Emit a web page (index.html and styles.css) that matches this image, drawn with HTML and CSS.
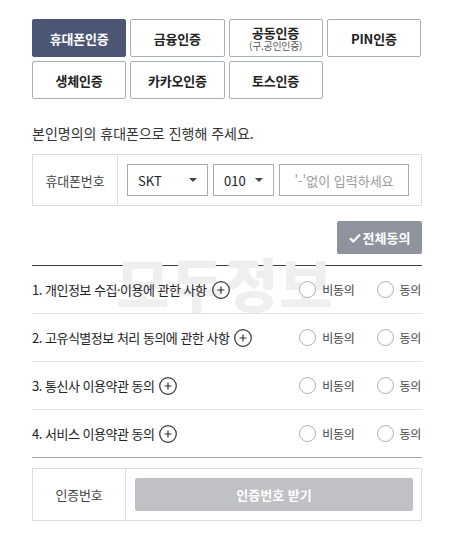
FILE: index.html
```html
<!DOCTYPE html>
<html lang="ko">
<head>
<meta charset="utf-8">
<link rel="stylesheet" href="styles.css">
</head>
<body>
<div class="page">
  <div class="tabs">
    <div class="tab active">휴대폰인증</div>
    <div class="tab">금융인증</div>
    <div class="tab two"><span>공동인증</span><small>(구.공인인증)</small></div>
    <div class="tab">PIN인증</div>
    <div class="tab">생체인증</div>
    <div class="tab">카카오인증</div>
    <div class="tab">토스인증</div>
  </div>

  <p class="heading">본인명의의 휴대폰으로 진행해 주세요.</p>

  <div class="phone-box">
    <div class="label">휴대폰번호</div>
    <div class="fields">
      <div class="select carrier"><span>SKT</span><i class="caret"></i></div>
      <div class="select prefix"><span>010</span><i class="caret"></i></div>
      <div class="input">'-'없이 입력하세요</div>
    </div>
  </div>

  <div class="all-row">
    <button class="all-btn"><svg width="12" height="10" viewBox="0 0 12 10"><path d="M1 5.2 L4.3 8.4 L11 1.5" fill="none" stroke="#fff" stroke-width="2.2"/></svg>전체동의</button>
  </div>

  <div class="terms">
    <div class="watermark">모두정보</div>
    <div class="term">
      <div class="title">1. 개인정보 수집·이용에 관한 사항<svg class="plus" width="18" height="18" viewBox="0 0 18 18"><circle cx="9" cy="9" r="8.3" fill="none" stroke="#333" stroke-width="1.2"/><path d="M5.5 9 H12.5 M9 5.5 V12.5" stroke="#333" stroke-width="1.2"/></svg></div>
      <div class="radios"><label><i class="radio"></i>비동의</label><label><i class="radio"></i>동의</label></div>
    </div>
    <div class="term">
      <div class="title">2. 고유식별정보 처리 동의에 관한 사항<svg class="plus" width="18" height="18" viewBox="0 0 18 18"><circle cx="9" cy="9" r="8.3" fill="none" stroke="#333" stroke-width="1.2"/><path d="M5.5 9 H12.5 M9 5.5 V12.5" stroke="#333" stroke-width="1.2"/></svg></div>
      <div class="radios"><label><i class="radio"></i>비동의</label><label><i class="radio"></i>동의</label></div>
    </div>
    <div class="term">
      <div class="title">3. 통신사 이용약관 동의<svg class="plus" width="18" height="18" viewBox="0 0 18 18"><circle cx="9" cy="9" r="8.3" fill="none" stroke="#333" stroke-width="1.2"/><path d="M5.5 9 H12.5 M9 5.5 V12.5" stroke="#333" stroke-width="1.2"/></svg></div>
      <div class="radios"><label><i class="radio"></i>비동의</label><label><i class="radio"></i>동의</label></div>
    </div>
    <div class="term">
      <div class="title">4. 서비스 이용약관 동의<svg class="plus" width="18" height="18" viewBox="0 0 18 18"><circle cx="9" cy="9" r="8.3" fill="none" stroke="#333" stroke-width="1.2"/><path d="M5.5 9 H12.5 M9 5.5 V12.5" stroke="#333" stroke-width="1.2"/></svg></div>
      <div class="radios"><label><i class="radio"></i>비동의</label><label><i class="radio"></i>동의</label></div>
    </div>
  </div>

  <div class="code-box">
    <div class="label">인증번호</div>
    <div class="code-cell"><button class="code-btn">인증번호 받기</button></div>
  </div>
</div>
</body>
</html>
```

FILE: styles.css
```css
* { box-sizing: border-box; }
body {
  margin: 0;
  background: #fff;
  font-family: "Noto Sans CJK KR", "Noto Sans", sans-serif;
  color: #222;
}
.page {
  width: 390px;
  margin-left: 32px;
  padding-top: 19px;
}
.tabs {
  width: 389px;
  display: grid;
  grid-template-columns: repeat(4, 1fr);
  gap: 4px 4px;
}
.tab {
  height: 38px;
  border: 1px solid #a7afb9;
  border-radius: 2px;
  display: flex;
  flex-direction: column;
  align-items: center;
  justify-content: center;
  font-size: 13px;
  font-weight: 700;
  color: #222;
  letter-spacing: -0.2px;
}
.tab.active {
  background: #4b5676;
  border-color: #4b5676;
  color: #fff;
}
.tab.two span { line-height: 15px; }
.tab.two small {
  font-size: 10px;
  font-weight: 400;
  color: #555;
  line-height: 12px;
  letter-spacing: -0.3px;
}
.heading {
  margin: 23px 0 0;
  font-size: 14px;
  line-height: 22px;
  color: #333;
  letter-spacing: 0;
}
.phone-box {
  margin-top: 10px;
  display: flex;
  border: 1px solid #dcdee3;
  height: 52px;
}
.label {
  width: 85px;
  border-right: 1px solid #dcdee3;
  display: flex;
  align-items: center;
  justify-content: center;
  font-size: 13px;
  color: #444;
  letter-spacing: -0.2px;
}
.fields {
  display: flex;
  align-items: center;
  gap: 5px;
  padding-left: 9px;
}
.select, .input {
  height: 32px;
  border: 1px solid #a2acb6;
  display: flex;
  align-items: center;
  font-size: 13px;
}
.select {
  justify-content: space-between;
  padding: 0 10px 0 10px;
  color: #222;
}
.carrier { width: 81px; }
.prefix { width: 61px; }
.caret {
  width: 0; height: 0;
  border-left: 4px solid transparent;
  border-right: 4px solid transparent;
  border-top: 4px solid #444;
}
.input {
  width: 130px;
  justify-content: center;
  color: #9a9a9a;
  letter-spacing: 0;
}
.all-row {
  display: flex;
  justify-content: flex-end;
  margin-top: 15px;
}
.all-btn {
  width: 85px;
  height: 33px;
  border: none;
  border-radius: 2px;
  background: #8e939e;
  color: #fff;
  font-family: inherit;
  font-size: 13px;
  font-weight: 700;
  display: flex;
  align-items: center;
  justify-content: center;
  gap: 2px;
  padding: 0;
}
.terms {
  position: relative;
  margin-top: 11px;
  border-top: 1px solid #3d4250;
}
.watermark {
  position: absolute;
  left: 84px;
  top: -19px;
  font-size: 58px;
  font-weight: 900;
  color: #efefef;
  letter-spacing: 1px;
  line-height: 70px;
  z-index: 0;
  pointer-events: none;
}
.term {
  position: relative;
  z-index: 1;
  height: 48px;
  display: flex;
  align-items: center;
  justify-content: space-between;
  border-bottom: 1px solid #dfe1e6;
}
.term:last-child { border-bottom-color: #a3a8ae; }
.title {
  display: flex;
  align-items: center;
  font-size: 13px;
  color: #222;
  letter-spacing: -0.5px;
}
.plus {
  margin-left: 5px;
  display: block;
}
.radios {
  display: flex;
  gap: 22px;
  padding-right: 1px;
}
.radios label {
  display: flex;
  align-items: center;
  gap: 6px;
  font-size: 12px;
  color: #444;
  letter-spacing: -0.3px;
}
.radio {
  width: 17px; height: 17px;
  border: 1px solid #a9b0b8;
  border-radius: 50%;
  background: #fff;
}
.code-box {
  margin-top: 10px;
  display: flex;
  border: 1px solid #dcdee3;
  height: 53px;
}
.code-box .label { width: 93px; }
.code-cell {
  flex: 1;
  display: flex;
  align-items: center;
  padding: 0 8px 0 9px;
}
.code-btn {
  width: 100%;
  height: 33px;
  border: none;
  border-radius: 2px;
  background: #bfc1c5;
  color: #fff;
  font-family: inherit;
  font-size: 13px;
  font-weight: 700;
}
```
